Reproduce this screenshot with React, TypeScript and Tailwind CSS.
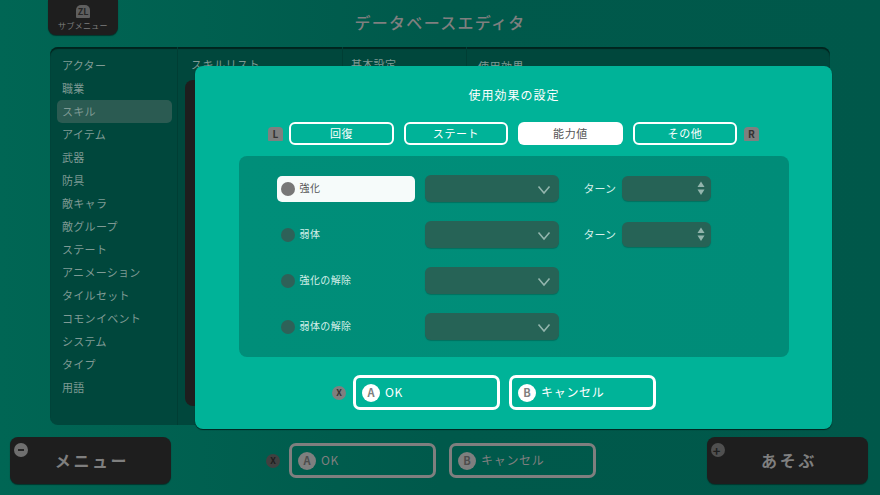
import React from "react";

const sideItems = [
  "アクター",
  "職業",
  "スキル",
  "アイテム",
  "武器",
  "防具",
  "敵キャラ",
  "敵グループ",
  "ステート",
  "アニメーション",
  "タイルセット",
  "コモンイベント",
  "システム",
  "タイプ",
  "用語",
];

const tabs = ["回復", "ステート", "能力値", "その他"];

const rows = [
  { label: "強化", turn: true, active: true },
  { label: "弱体", turn: true, active: false },
  { label: "強化の解除", turn: false, active: false },
  { label: "弱体の解除", turn: false, active: false },
];

function Chevron() {
  return (
    <svg width="14" height="10" viewBox="0 0 14 10" className="absolute right-[8px] top-[10px]">
      <path d="M1.5 1.5 L7 8 L12.5 1.5" fill="none" stroke="#93b5ad" strokeWidth="1.6" />
    </svg>
  );
}

function Spinner() {
  return (
    <svg width="10" height="16" viewBox="0 0 10 16" className="absolute right-[5px] top-[5px]">
      <path d="M5 0.5 L8.5 6 H1.5 Z" fill="#93b5ad" />
      <path d="M5 14 L8.5 8.5 H1.5 Z" fill="#93b5ad" />
    </svg>
  );
}

function ActionButton({ letter, label, dim }: { letter: string; label: string; dim?: boolean }) {
  return (
    <div
      className={
        dim
          ? "flex h-[35px] w-[147px] items-center gap-[5px] rounded-[7px] border-[3px] border-[#7f7f7f] pl-[6px] text-[12px] tracking-[0.7px] text-[#7f7f7f]"
          : "flex h-[35px] w-[147px] items-center gap-[5px] rounded-[7px] border-[3px] border-white pl-[6px] text-[12px] tracking-[0.7px] text-white"
      }
    >
      <span
        className={
          dim
            ? "flex h-[18px] w-[18px] items-center justify-center rounded-full bg-[#7f7f7f] text-[11px] font-bold tracking-normal text-[#4d4d4d]"
            : "flex h-[18px] w-[18px] items-center justify-center rounded-full bg-white text-[11px] font-bold tracking-normal text-[#808080]"
        }
      >
        {letter}
      </span>
      <span className="pb-[1px]">{label}</span>
    </div>
  );
}

export default function App() {
  return (
    <div
      className="relative flex h-[495px] w-[880px] flex-col overflow-hidden bg-gradient-to-r from-[#006654] via-[#00594b] to-[#00584a]"
      style={{ fontFamily: '"Noto Sans CJK JP", "Noto Sans", sans-serif' }}
    >
      {/* header */}
      <div className="grid h-[47px] grid-cols-[1fr_auto_1fr]">
        <div className="pl-[48px]">
          <div className="flex h-[35px] w-[70px] flex-col items-center rounded-b-[8px] bg-[#1e1e1e] pt-[5px] shadow-[0_1px_1px_#00352c]">
            <span className="flex h-[13px] w-[14px] items-center justify-center rounded-t-[5px] rounded-b-[1px] bg-[#5f5f5f] text-[9px] font-bold leading-none text-[#262626]">
              ZL
            </span>
            <span className="mt-[1px] text-[8px] leading-[13px] tracking-[0.3px] text-[#7f7f7f]">サブメニュー</span>
          </div>
        </div>
        <div className="pt-[10px] text-[16px] leading-[24px] font-medium tracking-[1.3px] text-[#7f7f7f]">
          データベースエディタ
        </div>
        <div />
      </div>

      {/* main panel behind the dialog */}
      <div className="ml-[50px] flex h-[378px] w-[780px] overflow-hidden rounded-[8px] bg-[#00473c] shadow-[inset_0_2px_1px_#00241e]">
        <div className="w-[128px] border-r-[1px] border-[#003e34] pt-[7px] pl-[7px]">
          {sideItems.map((item) => (
            <div
              key={item}
              className={
                item === "スキル"
                  ? "flex h-[23px] w-[115px] items-center rounded-[5px] bg-[#2b5b52] pl-[5px] text-[11px] tracking-[0.3px] text-[#7f9a94]"
                  : "flex h-[23px] w-[115px] items-center pl-[5px] text-[11px] tracking-[0.3px] text-[#7f9a94]"
              }
            >
              <span className="pb-[1px]">{item}</span>
            </div>
          ))}
        </div>
        <div className="w-[165px] border-r-[1px] border-[#003e34] pl-[7px]">
          <div className="h-[33px] pt-[8px] pl-[6px] text-[11px] leading-[18px] tracking-[0.5px] text-[#7f9a94]">
            スキルリスト
          </div>
          <div className="h-[326px] w-[140px] rounded-[8px] bg-[#1e1e1e]" />
        </div>
        <div className="w-[124px] border-r-[1px] border-[#003e34] pt-[8px] pl-[8px] text-[11px] leading-[18px] tracking-[0.3px] text-[#7f9a94]">
          基本設定
        </div>
        <div className="pt-[10px] pl-[11px] text-[11px] leading-[18px] tracking-[0.5px] text-[#7f9a94]">使用効果</div>
      </div>

      {/* footer */}
      <div className="mt-[12px] flex items-start pl-[10px]">
        <div className="relative flex h-[47px] w-[161px] items-center justify-center rounded-[8px] bg-[#1e1e1e] pb-[1px] pl-[3px] text-[16px] font-bold tracking-[2.6px] text-[#7f7f7f] shadow-[0_1px_1px_#00352c]">
          <span className="absolute top-[6px] left-[4px] flex h-[14px] w-[14px] items-center justify-center rounded-full bg-[#6f6f6f]">
            <span className="h-[2px] w-[6px] bg-[#262626]" />
          </span>
          メニュー
        </div>
        <div className="mt-[6px] ml-[95px] flex items-center">
          <span className="flex h-[14px] w-[14px] items-center justify-center rounded-full bg-[#404040] text-[9px] font-bold text-[#1e1e1e]">
            X
          </span>
          <div className="ml-[9px]">
            <ActionButton letter="A" label="OK" dim />
          </div>
          <div className="ml-[13px]">
            <ActionButton letter="B" label="キャンセル" dim />
          </div>
        </div>
        <div className="relative ml-[111px] flex h-[47px] w-[161px] items-center justify-center rounded-[8px] bg-[#1e1e1e] pb-[1px] pl-[3px] text-[16px] font-bold tracking-[2.6px] text-[#7f7f7f] shadow-[0_1px_1px_#00352c]">
          <span className="absolute top-[6px] left-[4px] flex h-[14px] w-[14px] items-center justify-center rounded-full bg-[#505050] text-[13px] leading-none font-bold text-[#1e1e1e]">
            +
          </span>
          あそぶ
        </div>
      </div>

      {/* dialog */}
      <div className="absolute top-[66px] left-[195px] flex h-[363px] w-[637px] flex-col items-center rounded-[8px] bg-[#00b398] shadow-[0_1px_1px_#00241e]">
        <div className="mt-[20px] h-[18px] pl-[1px] text-[12px] leading-[18px] tracking-[1px] text-white">
          使用効果の設定
        </div>

        <div className="mt-[18px] flex items-center">
          <span className="mr-[6px] flex h-[14px] w-[15px] items-center justify-center rounded-t-[4px] rounded-b-[1px] bg-[#7f7f7f] text-[10px] font-bold text-[#333333]">
            L
          </span>
          <div className="flex gap-[10px]">
            {tabs.map((tab, i) => (
              <div
                key={tab}
                className={
                  tab === "能力値"
                    ? "flex h-[23px] w-[105px] items-center justify-center rounded-[6px] bg-white pb-[1px] text-[11px] tracking-[0.6px] text-[#555555]"
                    : i === 0
                      ? "flex h-[23px] w-[105px] items-center justify-center rounded-[6px] border-[2px] border-white pb-[1px] text-[11px] tracking-[0.6px] text-white"
                      : "flex h-[23px] w-[104px] items-center justify-center rounded-[6px] border-[2px] border-white pb-[1px] text-[11px] tracking-[0.6px] text-white"
                }
              >
                {tab}
              </div>
            ))}
          </div>
          <span className="ml-[7px] flex h-[14px] w-[15px] items-center justify-center rounded-t-[4px] rounded-b-[1px] bg-[#7f7f7f] text-[10px] font-bold text-[#333333]">
            R
          </span>
        </div>

        <div className="mt-[11px] flex h-[201px] w-[550px] flex-col gap-[19px] rounded-[8px] bg-gradient-to-r from-[#008e79] to-[#008c78] pt-[19px] pl-[38px]">
          {rows.map((row) => (
            <div key={row.label} className="flex h-[27px] items-center">
              <div
                className={
                  row.active
                    ? "flex h-[26px] w-[138px] items-center gap-[5px] rounded-[5px] bg-[#f6fbfa] pl-[4px] text-[10px] tracking-[0.4px] text-[#555555]"
                    : "flex h-[26px] w-[138px] items-center gap-[5px] rounded-[5px] pl-[4px] text-[10px] tracking-[0.4px] text-[#d6f0ea]"
                }
              >
                <span
                  className={
                    row.active
                      ? "h-[14px] w-[14px] rounded-full bg-[#777777]"
                      : "h-[14px] w-[14px] rounded-full bg-[#2e6158]"
                  }
                />
                <span className="pb-[2px]">{row.label}</span>
              </div>
              <div className="relative ml-[10px] h-[27px] w-[134px] rounded-[6px] bg-[#266356] shadow-[0_1px_1px_#00705f]">
                <Chevron />
              </div>
              {row.turn && (
                <>
                  <span className="ml-[25px] w-[38px] text-[11px] text-[#d6f0ea]">ターン</span>
                  <div className="relative h-[25px] w-[89px] rounded-[6px] bg-[#266356] shadow-[0_1px_1px_#00705f]">
                    <Spinner />
                  </div>
                </>
              )}
            </div>
          ))}
        </div>

        <div className="mt-[18px] flex items-center self-start pl-[137px]">
          <span className="flex h-[14px] w-[14px] items-center justify-center rounded-full bg-[#7f7f7f] text-[9px] font-bold text-[#333333]">
            X
          </span>
          <div className="ml-[7px]">
            <ActionButton letter="A" label="OK" />
          </div>
          <div className="ml-[9px]">
            <ActionButton letter="B" label="キャンセル" />
          </div>
        </div>
      </div>
    </div>
  );
}
